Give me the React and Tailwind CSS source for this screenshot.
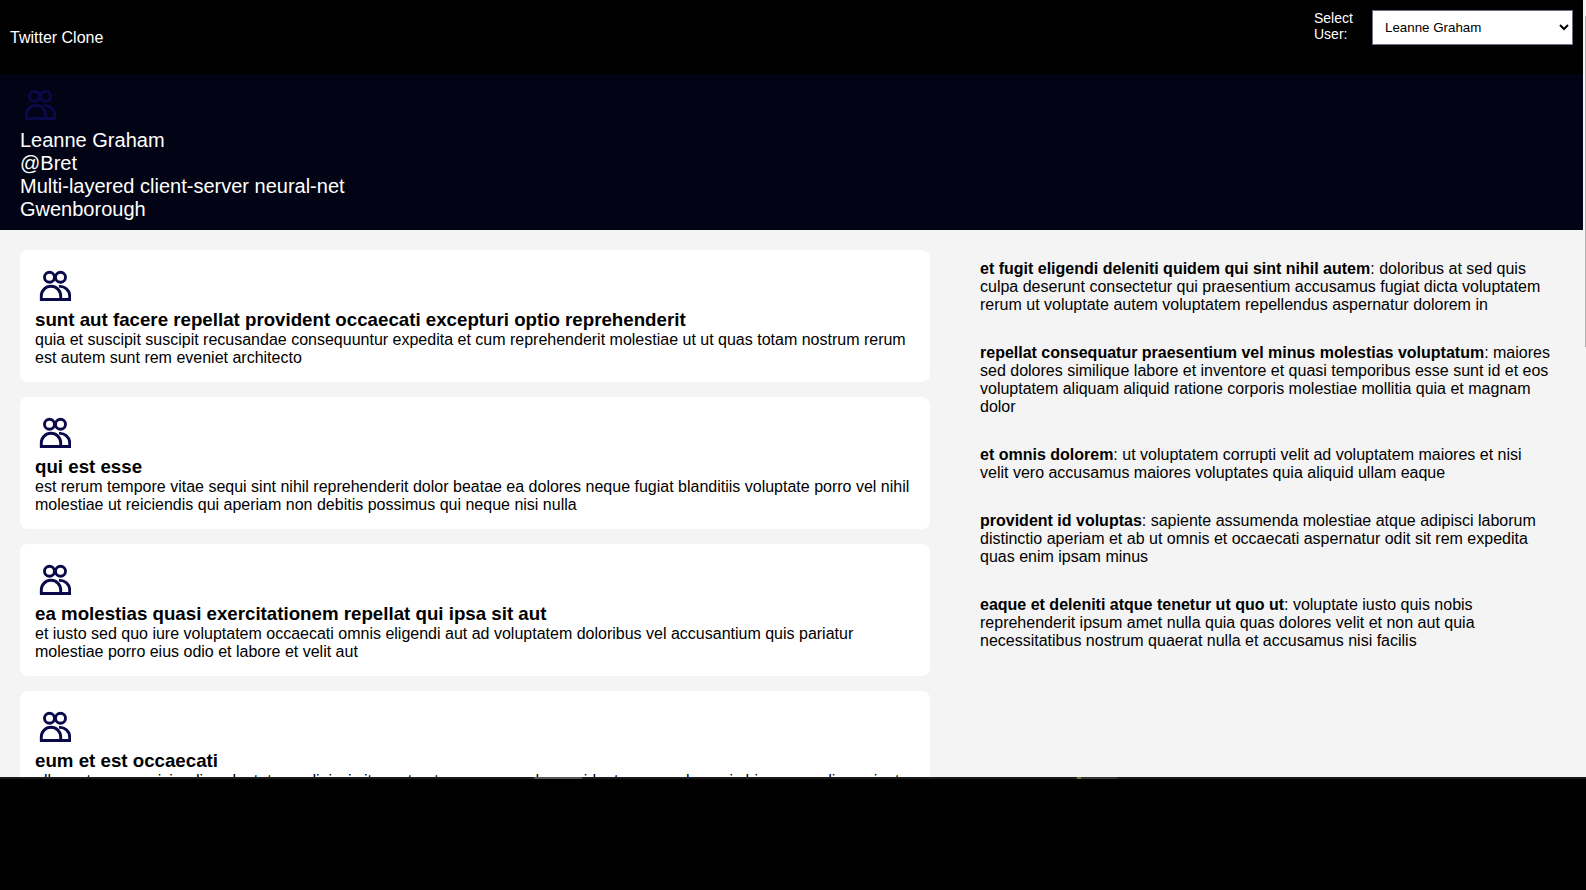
const posts = [
  {
    title: 'sunt aut facere repellat provident occaecati excepturi optio reprehenderit',
    body: 'quia et suscipit suscipit recusandae consequuntur expedita et cum reprehenderit molestiae ut ut quas totam nostrum rerum est autem sunt rem eveniet architecto',
  },
  {
    title: 'qui est esse',
    body: 'est rerum tempore vitae sequi sint nihil reprehenderit dolor beatae ea dolores neque fugiat blanditiis voluptate porro vel nihil molestiae ut reiciendis qui aperiam non debitis possimus qui neque nisi nulla',
  },
  {
    title: 'ea molestias quasi exercitationem repellat qui ipsa sit aut',
    body: 'et iusto sed quo iure voluptatem occaecati omnis eligendi aut ad voluptatem doloribus vel accusantium quis pariatur molestiae porro eius odio et labore et velit aut',
  },
  {
    title: 'eum et est occaecati',
    body: 'ullam et saepe reiciendis voluptatem adipisci sit amet autem assumenda provident rerum culpa quis hic commodi nesciunt rem tenetur doloremque ipsam iure quis sunt voluptatem rerum illo velit',
  },
];

const comments = [
  {
    name: 'et fugit eligendi deleniti quidem qui sint nihil autem',
    body: 'doloribus at sed quis culpa deserunt consectetur qui praesentium accusamus fugiat dicta voluptatem rerum ut voluptate autem voluptatem repellendus aspernatur dolorem in',
  },
  {
    name: 'repellat consequatur praesentium vel minus molestias voluptatum',
    body: 'maiores sed dolores similique labore et inventore et quasi temporibus esse sunt id et eos voluptatem aliquam aliquid ratione corporis molestiae mollitia quia et magnam dolor',
  },
  {
    name: 'et omnis dolorem',
    body: 'ut voluptatem corrupti velit ad voluptatem maiores et nisi velit vero accusamus maiores voluptates quia aliquid ullam eaque',
  },
  {
    name: 'provident id voluptas',
    body: 'sapiente assumenda molestiae atque adipisci laborum distinctio aperiam et ab ut omnis et occaecati aspernatur odit sit rem expedita quas enim ipsam minus',
  },
  {
    name: 'eaque et deleniti atque tenetur ut quo ut',
    body: 'voluptate iusto quis nobis reprehenderit ipsum amet nulla quia quas dolores velit et non aut quia necessitatibus nostrum quaerat nulla et accusamus nisi facilis',
  },
];

const UsersIcon = () => (
  <svg viewBox="0 0 32 32" className="w-8 h-8 block" fill="none" stroke="#0a0a4a" strokeWidth="2.9">
    <circle cx="10.5" cy="7.2" r="5" />
    <circle cx="21.5" cy="7.2" r="5" />
    <path d="M2.3 29.5v-3.5a9.7 9.7 0 0 1 19.4 0v3.5z" />
    <path d="M20 16.4a9.7 9.7 0 0 1 10.7 9.6v3.5h-8" />
  </svg>
);

const App = () => {
  return (
    <div className="h-[890px] bg-black font-['Liberation_Sans',Arial,sans-serif] overflow-hidden">
      <div className="h-[777px] flex overflow-hidden">
        <div className="flex-1 min-w-0 flex flex-col">
          <header className="h-[74px] shrink-0 bg-black text-white flex items-center justify-between px-2.5">
            <div className="text-base mt-0.5">Twitter Clone</div>
            <div className="flex items-center gap-[18px] mb-5">
              <label className="text-sm leading-4 w-10 mb-0.5">Select User:</label>
              <select className="w-[201px] h-[35px] pl-2 bg-white text-black text-[13.33px] border border-gray-500 rounded-none">
                <option>Leanne Graham</option>
              </select>
            </div>
          </header>

          <section className="h-[156px] shrink-0 bg-[#020314] text-white px-5 pt-[15px] text-xl leading-[23px]">
            <div className="pl-1 mb-2">
              <UsersIcon />
            </div>
            <div>Leanne Graham</div>
            <div>@Bret</div>
            <div>Multi-layered client-server neural-net</div>
            <div>Gwenborough</div>
          </section>

          <main className="flex-1 min-h-0 bg-[#f4f4f4] flex overflow-hidden">
            <div className="w-[930px] shrink-0 pl-5 pt-5 flex flex-col gap-[15px]">
              {posts.map((post) => (
                <div key={post.title} className="bg-white rounded-lg p-[15px] shrink-0">
                  <div className="h-11 pl-1 pt-[5px]">
                    <UsersIcon />
                  </div>
                  <div className="text-[18.72px] leading-[22px] font-bold text-black">{post.title}</div>
                  <div className="text-base leading-[18px] text-black">{post.body}</div>
                </div>
              ))}
            </div>
            <div className="flex-1 min-w-0 pl-[50px] pr-[30px] pt-[30px] flex flex-col gap-[30px]">
              {comments.map((comment) => (
                <p key={comment.name} className="text-base leading-[18px] text-black">
                  <b>{comment.name}</b>: {comment.body}
                </p>
              ))}
            </div>
          </main>
        </div>
        {/* scrollbar, only a 1px thumb is visible */}
        <div className="w-[3px] shrink-0 bg-[#f4f4f4] flex justify-end">
          <div className="w-px h-[331px] mt-4 bg-[#b0b0b0]" />
        </div>
      </div>
      {/* thin line along the bottom edge */}
      <div className="h-[2px] bg-[#1a1a1a] flex">
        <div className="w-[534px]" />
        <div className="w-[48px] bg-[#555555]" />
        <div className="w-[495px]" />
        <div className="w-1 bg-[#7a7428]" />
        <div className="w-[36px] bg-[#333333]" />
      </div>
    </div>
  );
};

export default App;
